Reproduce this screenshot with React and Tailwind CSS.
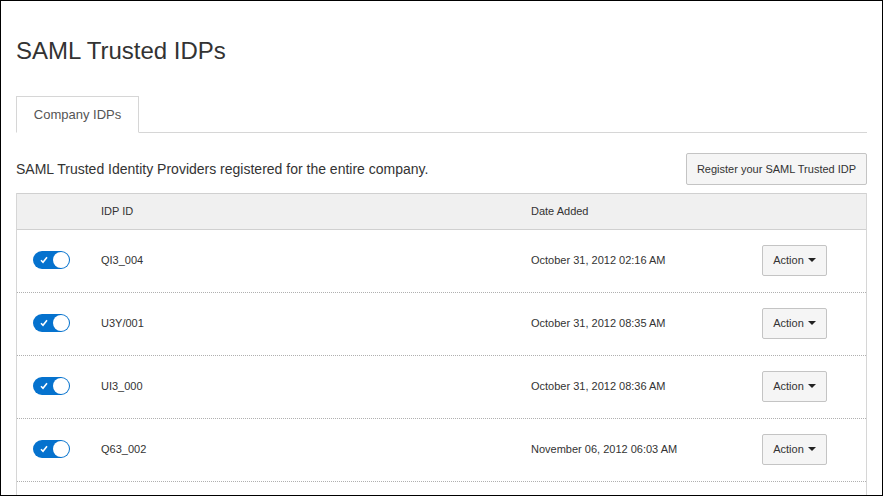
import React from "react";

const rows = [
  { id: "QI3_004", date: "October 31, 2012 02:16 AM" },
  { id: "U3Y/001", date: "October 31, 2012 08:35 AM" },
  { id: "UI3_000", date: "October 31, 2012 08:36 AM" },
  { id: "Q63_002", date: "November 06, 2012 06:03 AM" },
];

function Toggle() {
  return (
    <div className="relative w-[37px] h-[18px] rounded-full bg-[#0572ce] flex items-center">
      <svg className="absolute left-[7px] top-[5px]" width="8" height="8" viewBox="0 0 8 8">
        <polyline points="1,4.2 3,6.2 7,1.2" fill="none" stroke="white" strokeWidth="1.6" />
      </svg>
      <div className="absolute right-[1px] top-[1px] w-[16px] h-[16px] rounded-full bg-white" />
    </div>
  );
}

function ActionButton() {
  return (
    <button className="h-[31px] w-[65px] flex items-center justify-center gap-[4px] border border-[#c4c4c4] rounded-[2px] bg-[#f5f5f5] text-[11px] text-[#333]">
      <span>Action</span>
      <span className="w-0 h-0 border-l-[4px] border-r-[4px] border-t-[4px] border-l-transparent border-r-transparent border-t-[#222]" />
    </button>
  );
}

export default function App() {
  return (
    <div
      className="w-[883px] h-[496px] border border-black bg-white overflow-hidden text-[#333]"
      style={{ fontFamily: '"Liberation Sans", Arial, sans-serif' }}
    >
      <div className="pl-[15px] pr-[15px] pt-[37px]">
        <h1 className="text-[24px] leading-[26px] text-[#333]">SAML Trusted IDPs</h1>

        <div className="mt-[32px] flex border-b border-[#d6d6d6]">
          <div className="h-[37px] w-[123px] border border-[#d6d6d6] border-b-white -mb-px bg-white flex items-center justify-center text-[13px] text-[#555]">
            Company IDPs
          </div>
        </div>

        <div className="mt-[20px] flex items-center justify-between">
          <p className="text-[14px] text-[#333]">
            SAML Trusted Identity Providers registered for the entire company.
          </p>
          <button className="h-[32px] w-[181px] border border-[#c4c4c4] rounded-[2px] bg-[#f5f5f5] text-[11px] text-[#333]">
            Register your SAML Trusted IDP
          </button>
        </div>

        <div className="mt-[8px] border-l border-r border-[#d6d6d6] h-[400px]">
          <div className="h-[37px] bg-[#f0f0f0] border-t border-b border-[#d0d0d0] grid grid-cols-[84px_430px_231px_1fr] items-center text-[11px] text-[#333]">
            <div />
            <div>IDP ID</div>
            <div>Date Added</div>
            <div />
          </div>
          {rows.map((r) => (
            <div
              key={r.id}
              className="h-[63px] border-b border-dotted border-[#b0b0b0] grid grid-cols-[84px_430px_231px_1fr] items-center text-[11px] text-[#333]"
            >
              <div className="pl-[16px] pb-[2px]">
                <Toggle />
              </div>
              <div className="pb-[2px]">{r.id}</div>
              <div className="pb-[2px]">{r.date}</div>
              <div className="pb-[2px]">
                <ActionButton />
              </div>
            </div>
          ))}
        </div>
      </div>
    </div>
  );
}
